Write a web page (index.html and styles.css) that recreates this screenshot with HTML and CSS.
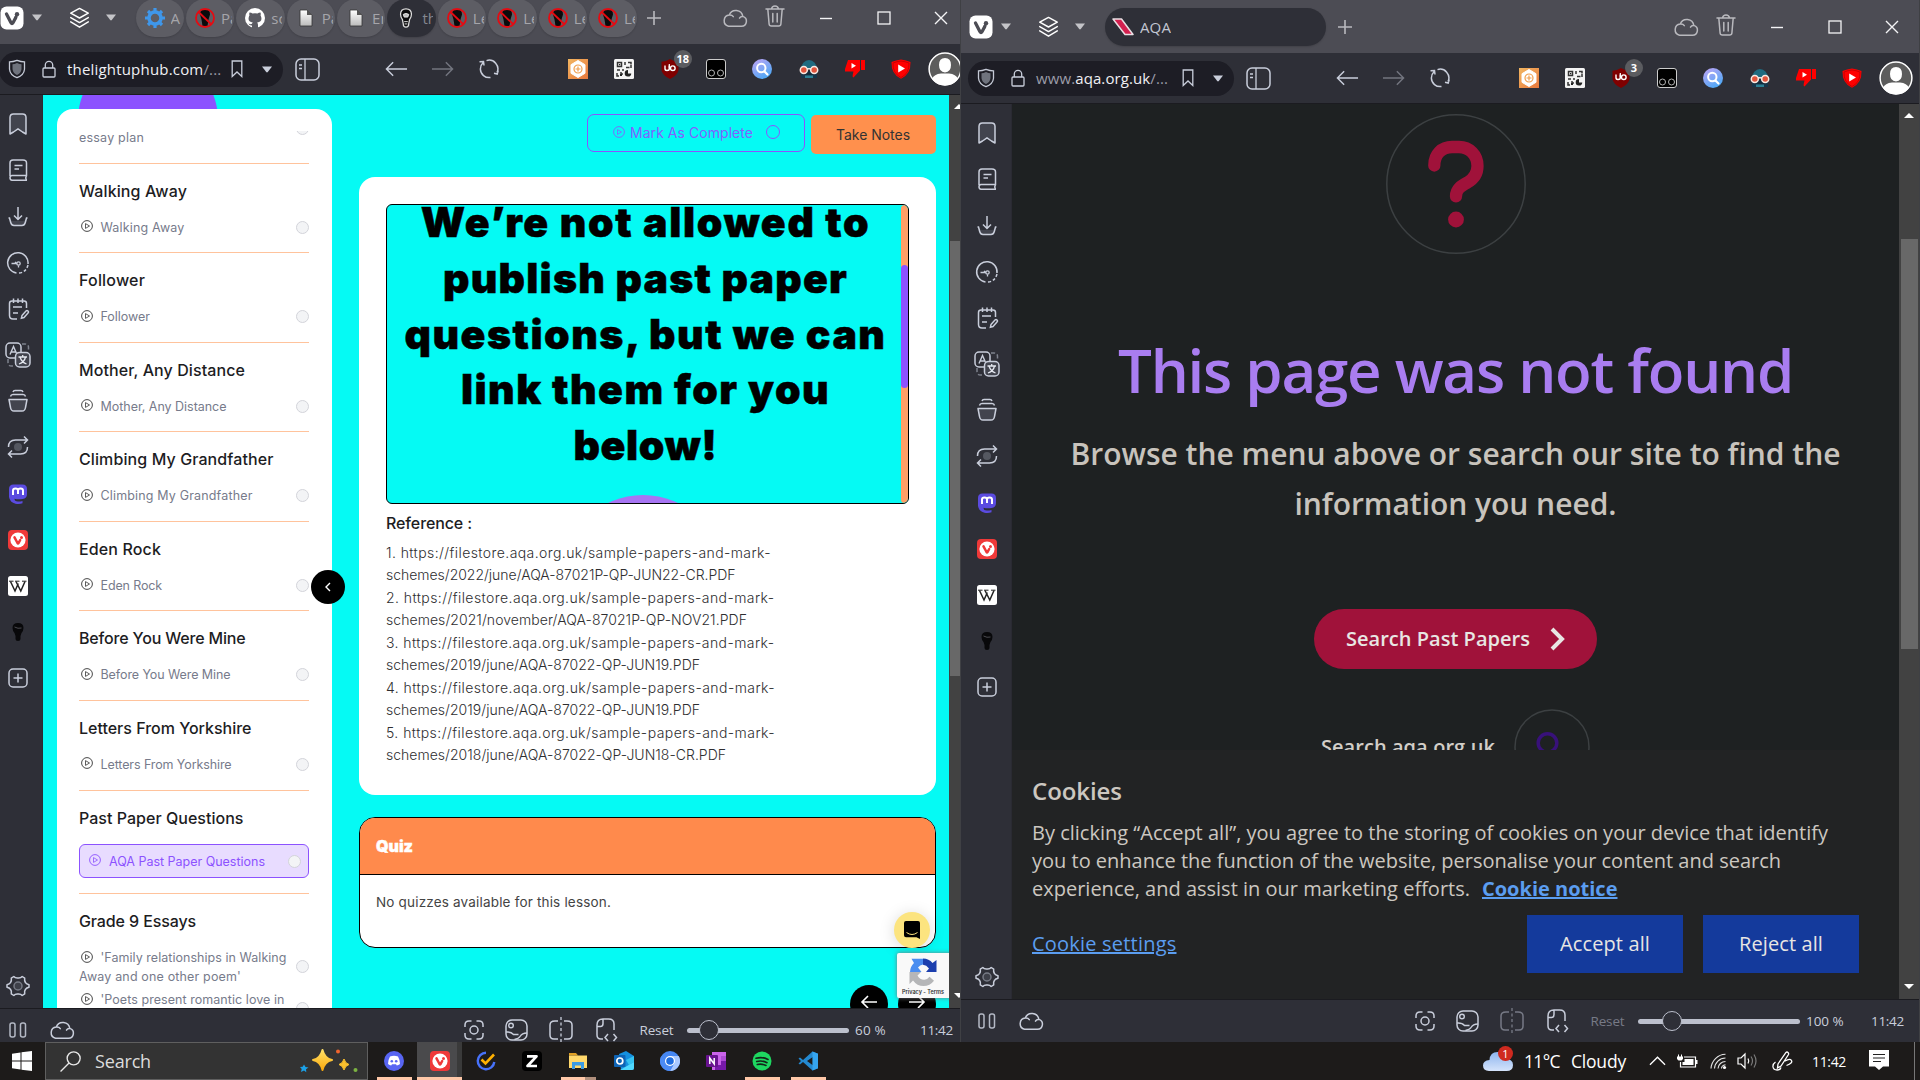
FILE: index.html
```html
<!DOCTYPE html>
<html lang="en">
<head>
<meta charset="utf-8">
<title>Desktop</title>
<link rel="stylesheet" href="styles.css">
</head>
<body>
<svg class="defs" aria-hidden="true">
  <linearGradient id="gOrange" x1="0" y1="0" x2="1" y2="1"><stop offset="0" stop-color="#f2b661"/><stop offset="1" stop-color="#e8783c"/></linearGradient>
  <linearGradient id="gSearch" x1="0" y1="0" x2="0.6" y2="1"><stop offset="0" stop-color="#c3a4f6"/><stop offset="1" stop-color="#4fa8f5"/></linearGradient>
  <linearGradient id="gStar" x1="0" y1="0" x2="0" y2="1"><stop offset="0" stop-color="#ffe066"/><stop offset="1" stop-color="#f9a90e"/></linearGradient>
  <linearGradient id="gCloud" x1="0" y1="0" x2="0" y2="1"><stop offset="0" stop-color="#8db4ee"/><stop offset="1" stop-color="#d5e4fb"/></linearGradient>
  <linearGradient id="gDoc" x1="0" y1="0" x2="0" y2="1"><stop offset="0" stop-color="#fff"/><stop offset="1" stop-color="#bbb"/></linearGradient>

  <symbol id="vivaldi" viewBox="0 0 24 24"><rect x=".5" y=".5" width="23" height="23" rx="6" fill="#fff"/><path d="M6.500 8 11 16.700q1 1.600 2 0L15.800 11.500" fill="none" stroke="#4c4c54" stroke-width="3.300" stroke-linecap="round" stroke-linejoin="round"/><circle cx="17" cy="8.300" r="2.200" fill="#4c4c54"/><path d="M16.500 9.500 15 13" stroke="#4c4c54" stroke-width="2.500"/></symbol>
  <symbol id="caret" viewBox="0 0 10 7"><path d="M0 .5h10L5.800 6q-.8.8-1.600 0z" fill="currentColor"/></symbol>
  <symbol id="layers" viewBox="0 0 22 22"><g fill="none" stroke="#fff" stroke-width="1.500" stroke-linejoin="round" stroke-linecap="round"><path d="M11 1 20.200 6 11 11 1.800 6z"/><path d="M1.800 10.500 11 15.800l9.200-5.300M1.800 15 11 20.600 20.200 15"/></g></symbol>
  <symbol id="plus" viewBox="0 0 16 16"><path d="M8 1v14M1 8h14" stroke="currentColor" stroke-width="1.600"/></symbol>
  <symbol id="cloud" viewBox="0 0 26 20"><path d="M6.500 18.200h13a5 5 0 0 0 1.300-9.800A7 7 0 0 0 7.300 7a5.700 5.700 0 0 0-.8 11.200zM7.300 7q2.800-.2 4 1.600M20.800 8.400q-2.300-.2-3.300 1.800" fill="none" stroke="currentColor" stroke-width="1.500" stroke-linecap="round"/></symbol>
  <symbol id="trash" viewBox="0 0 20 22"><path d="M1 4h18M6.500 4q.5-3 3.500-3t3.500 3M2.800 4l1.300 15q.2 2 2.200 2h7.400q2 0 2.200-2l1.300-15M7.800 8.500v8.500M12.200 8.500V17" fill="none" stroke="currentColor" stroke-width="1.500" stroke-linecap="round"/></symbol>
  <symbol id="min" viewBox="0 0 14 14"><path d="M1 7.500h12" stroke="#f4f4f6" stroke-width="1.400"/></symbol>
  <symbol id="max" viewBox="0 0 14 14"><rect x="1" y="1" width="12" height="12" fill="none" stroke="#f4f4f6" stroke-width="1.300"/></symbol>
  <symbol id="close" viewBox="0 0 14 14"><path d="M1 1l12 12M13 1 1 13" stroke="#f4f4f6" stroke-width="1.400"/></symbol>
  <symbol id="shield" viewBox="0 0 18 20"><path d="M9 1.300q4 1.500 7.500 1.500v7.400Q16 16 9 18.700 2 16 1.500 10.200V2.800Q5 2.800 9 1.300z" fill="none" stroke="#c5cad6" stroke-width="1.300"/><path d="M9 4q2.500 1.200 4.500 1.200v5q-.5 4-4.500 5.800-4-1.800-4.500-5.800v-5Q6.500 5.200 9 4z" fill="#6f737d"/></symbol>
  <symbol id="lock" viewBox="0 0 14 18"><rect x="1" y="8" width="12" height="9" rx="1" fill="none" stroke="#c9cedb" stroke-width="1.300"/><path d="M3.300 8V5a3.700 3.700 0 0 1 7.400 0v3" fill="none" stroke="#c9cedb" stroke-width="1.300"/></symbol>
  <symbol id="mark" viewBox="0 0 12 18"><path d="M1.200 1h9.600v15.500L6 12l-4.800 4.500z" fill="none" stroke="#c9cedb" stroke-width="1.300"/></symbol>
  <symbol id="panel" viewBox="0 0 25 23"><rect x="1" y="1" width="23" height="21" rx="5" fill="none" stroke="#c9cedb" stroke-width="1.500"/><path d="M10 1v21M4 7h3M4 10.500h3" stroke="#c9cedb" stroke-width="1.300"/></symbol>
  <symbol id="back" viewBox="0 0 24 16"><path d="M23 8H1.500M8.500 1 1.500 8l7 7" fill="none" stroke="currentColor" stroke-width="1.500"/></symbol>
  <symbol id="forward" viewBox="0 0 24 16"><path d="M1 8h21.500M15.500 1l7 7-7 7" fill="none" stroke="currentColor" stroke-width="1.500"/></symbol>
  <symbol id="reload" viewBox="0 0 22 22"><path d="M5.500 17.600A8.600 8.600 0 0 1 5 4.800M8.500 2.600a8.700 8.700 0 0 1 10.500 12M1.500 3.800l4-.3.500 4M16 15.300l3.200.7 1-3.500M5.500 17.600q3 2.500 7 1.900" fill="none" stroke="#c9cedb" stroke-width="1.500"/></symbol>

  <symbol id="xHex" viewBox="0 0 20 20"><rect width="20" height="20" fill="url(#gOrange)"/><path d="M10 1.500 17 5.700v8.600L10 18.500 3 14.300V5.700z" fill="#fff" stroke="#fff" stroke-linejoin="round"/><circle cx="10" cy="10" r="4" fill="none" stroke="#f0a050" stroke-width="1.200"/><path d="M10 7.500v5M7.500 10h5" stroke="#f0a050" stroke-width="1.200"/></symbol>
  <symbol id="xQr" viewBox="0 0 20 20"><rect width="20" height="20" rx="1.500" fill="#f4f4f4"/><g fill="none" stroke="#333" stroke-width="1.500"><path d="M3.500 3.500h4v4h-4zM11 3v3M12 8.500h3.500M14 3.500h3v2M17 6v3M3 11h3M8 11h2M3 14v3h2M7 13v2h2"/></g><path d="M14 11a3.300 3.300 0 1 0 3.300 3.500H14z" fill="#222"/><path d="M5 5h1.200v1.200H5zM6 15h2v2H6z" fill="#222"/></symbol>
  <symbol id="xUb" viewBox="0 0 18 20"><path d="M9 0q4 2.500 8.500 2.700V11q-.5 5-8.500 9Q1 16 .5 11V2.700Q5 2.500 9 0z" fill="#800000"/><path d="M4 6.500v3.200q0 1.800 2 1.800 2.300 0 2.300-1.800V6.500M9.300 6.500" fill="none" stroke="#fff" stroke-width="1.400"/><path d="M8.300 5v4.500" stroke="#fff" stroke-width="1.200"/><circle cx="11.800" cy="9.200" r="2.300" fill="none" stroke="#fff" stroke-width="1.400"/></symbol>
  <symbol id="xTamper" viewBox="0 0 20 20"><rect x=".5" y=".5" width="19" height="19" rx="2.500" fill="#000" stroke="#ccc"/><circle cx="5.500" cy="14" r="3" fill="none" stroke="#b5b5b5"/><circle cx="14.500" cy="14" r="3" fill="none" stroke="#b5b5b5"/></symbol>
  <symbol id="xSearch" viewBox="0 0 20 20"><circle cx="10" cy="10" r="10" fill="url(#gSearch)"/><circle cx="9.300" cy="9" r="4.200" fill="none" stroke="#fff" stroke-width="2"/><path d="m12.500 12.500 3 3" stroke="#fff" stroke-width="2.200" stroke-linecap="round"/></symbol>
  <symbol id="xHat" viewBox="0 0 20 20"><path d="M2 10a8 9 0 0 1 16 0z" fill="#1f6b80"/><path d="M2 14h16v5H2z" fill="#16354a"/><path d="M6 16.500h8V19H6z" fill="#2c7f93"/><path d="M4 12h12v4H4z" fill="#122b3b"/><circle cx="4.800" cy="11" r="3.500" fill="#e2553c" stroke="#f7e9e2" stroke-width="1.500"/><circle cx="15.200" cy="11" r="3.500" fill="#e2553c" stroke="#f7e9e2" stroke-width="1.500"/><path d="M8 9.800h4" stroke="#f7e9e2" stroke-width="1.500"/></symbol>
  <symbol id="xDislike" viewBox="0 0 20 20"><path d="M3 1h12v10.500L8.500 18.500q-1.300-.5-.8-2.500l.8-3.500H0V10z M16 1h4v10h-4z" fill="#f00"/><path d="M6.500 4v5.500L11 6.800z" fill="#fff"/></symbol>
  <symbol id="xSponsor" viewBox="0 0 20 20"><path d="M10 .5Q15 1 19.500 3 20 15 10 19.800 0 15 .5 3 5 1 10 .5z" fill="#f00"/><path d="M10 2q4 .4 8 2 .5 10.500-8 14.500Q1.500 14.500 2 4q4-1.600 8-2z" fill="none" stroke="#b50000" stroke-width=".7"/><path d="M7.200 5.500v8L14 9.500z" fill="#fff"/></symbol>
  <symbol id="avatar" viewBox="0 0 34 34"><circle cx="17" cy="17" r="16" fill="#5c5c5c"/><path d="M17 6q6 0 6 7 0 7-6 7.500-6-.5-6-7.500 0-7 6-7zM4 27q2-5 9-5.500h8q7 .5 9 5.500-5 6.500-13 6.500T4 27z" fill="#fff"/><circle cx="17" cy="17" r="15.900" fill="none" stroke="#fff" stroke-width="1.500"/></symbol>

  <symbol id="sBook" viewBox="0 0 24 24"><path d="M4 5.500Q4 2 7.500 2h9Q20 2 20 5.500V22l-3.500-2-4.500-3.200L7.500 20 4 22z" fill="#42444e" stroke="#c9cedb" stroke-width="1.500" stroke-linejoin="round"/></symbol>
  <symbol id="sRead" viewBox="0 0 24 24"><path d="M4 18V5q0-3 3-3h10q3.500 0 3.500 3v12.500H6Q4 17.500 4 19.800T6 22.200h15M20.500 17.500q-1.500 2.500 0 4.700M8.500 7.500h8M8.500 11h4.500" fill="none" stroke="#c9cedb" stroke-width="1.500"/></symbol>
  <symbol id="sDown" viewBox="0 0 24 24"><path d="M3.500 14.500q1 7 4.500 7h8q3.500 0 4.500-7-1.500 2.500-4 2.500h-9q-2.500 0-4-2.500z" fill="#42444e"/><path d="M12 3v12M8 11.500l4 4 4-4M2.500 14h1l1.200 4.500q.8 3 3.300 3h8q2.500 0 3.300-3l1.200-4.500h1" fill="none" stroke="#c9cedb" stroke-width="1.500"/></symbol>
  <symbol id="sHist" viewBox="0 0 24 24"><path d="M10.500 22A10.200 10.200 0 1 1 22 13" fill="none" stroke="#c9cedb" stroke-width="1.500"/><path d="M13 22q7-.5 9-8" fill="none" stroke="#c9cedb" stroke-width="1.500" stroke-dasharray="3 2"/><path d="M5.500 12.500H11M11 12.500l-2-1.500M12.500 14.500v2" stroke="#c9cedb" stroke-width="1.300"/><circle cx="12.500" cy="12.500" r="1.700" fill="none" stroke="#c9cedb" stroke-width="1.300"/></symbol>
  <symbol id="sNote" viewBox="0 0 24 24"><path d="M11 22H7q-3.500 0-3.500-3.500v-12Q3.500 4 6 4h12q2.500 0 2.500 2.500V11M7.500 1.500V6M12 1.500V6M16.500 1.500V6M7 10h9M7 16h5M16 18.500l4-4.500q1-1 2 0t0 2l-4 4.500-2.600.7z" fill="none" stroke="#c9cedb" stroke-width="1.500"/></symbol>
  <symbol id="sTrans" viewBox="0 0 26 26"><path d="M17 2h3q3.500 0 3.500 3.500V8M3 17v3.500Q3 24 6.500 24H9" fill="none" stroke="#7e828d" stroke-width="1.500" stroke-dasharray="4 2.500"/><rect x="1" y="1" width="15" height="15" rx="4" fill="#2e2f37" stroke="#c9cedb" stroke-width="1.500"/><path d="m5 12.500 3.500-8 3.500 8M6 10h5" fill="none" stroke="#c9cedb" stroke-width="1.400"/><rect x="10.500" y="10.500" width="14.500" height="14.500" rx="4" fill="#42444e" stroke="#c9cedb" stroke-width="1.500"/><path d="M13.500 15h8.500M17.700 13v2M20.500 15q-1 5-6.500 7M15 15q1.500 5 6.500 7" fill="none" stroke="#e4e7ef" stroke-width="1.300"/></symbol>
  <symbol id="sStack" viewBox="0 0 24 24"><path d="M3 10.500h18l-1.500 8Q19 22 16 22H8q-3 0-3.500-3.500z" fill="#42444e" stroke="#c9cedb" stroke-width="1.500" stroke-linejoin="round"/><path d="M4.500 7.500q.5-2 2.500-2h10q2 0 2.500 2M7 3q.5-1.500 2-1.500h6q1.500 0 2 1.500" fill="none" stroke="#c9cedb" stroke-width="1.500"/></symbol>
  <symbol id="sSync" viewBox="0 0 24 24"><circle cx="12" cy="12" r="4" fill="#555861"/><path d="M2.500 12q0-7 7-7h12M18 1.500 21.500 5 18 8.500M21.500 12q0 7-7 7h-12M6 15.500 2.500 19 6 22.500" fill="none" stroke="#c9cedb" stroke-width="1.500"/></symbol>
  <symbol id="sMast" viewBox="0 0 20 20"><path d="M1 5Q1 .5 5.500.5h9Q19 .5 19 5v5q0 4.500-4.500 5-4 .7-8-.2 0 3 4 2.700 2 0 4-.5v2.200q-3 1.200-7 .5Q2 18.500 1 13z" fill="#5b4be0"/><path d="M5 11V6.500q0-2 2.500-2T10 6.500V10M10 6.500q0-2 2.500-2t2.500 2V11" fill="none" stroke="#fff" stroke-width="2"/></symbol>
  <symbol id="sViv" viewBox="0 0 20 20"><rect width="20" height="20" rx="4" fill="#ef3939"/><circle cx="10" cy="10" r="7.600" fill="#fff"/><path d="m6.500 7.300 3 5.700q.5.800 1 0l1.700-3" fill="none" stroke="#ef3939" stroke-width="2.500" stroke-linecap="round"/><circle cx="13.500" cy="7.500" r="1.500" fill="#ef3939"/></symbol>
  <symbol id="sWiki" viewBox="0 0 20 20"><rect width="20" height="20" rx="2.500" fill="#fff"/><path d="M2.500 5.500 7 15l3.300-7.500M8 5.500 12.800 15l4.200-9.500" fill="none" stroke="#222" stroke-width="1.500"/><path d="M1 5.200h4.500M7 5.200h4.500M14 5.200h4.500" stroke="#222" stroke-width="1"/></symbol>
  <symbol id="sBulb" viewBox="0 0 20 20"><path d="M10 1q5.500 0 5.500 5 0 2.500-2 5l-1 3v3q0 2-2.500 2t-2.500-2v-3l-1-3q-2-2.500-2-5 0-5 5.500-5z" fill="#08080a"/><path d="M6.500 5q3.500 2 7 1" stroke="#4b4b50" fill="none"/></symbol>
  <symbol id="sAdd" viewBox="0 0 20 20"><rect x="1" y="1" width="18" height="18" rx="4" fill="none" stroke="#c9cedb" stroke-width="1.500"/><path d="M10 5.500v9M5.500 10h9" stroke="#c9cedb" stroke-width="1.500"/></symbol>
  <symbol id="gear" viewBox="0 0 24 24"><path d="M7.800 2.500q1.500 1.800 4.200 1.500 2.700.3 4.200-1.500l2.500 1.700q-.5 2.800.8 4.500 1 1.500 3.500 2v2.600q-2.500.5-3.500 2-1.300 1.700-.8 4.500l-2.500 1.700q-1.500-1.800-4.200-1.500-2.700-.3-4.200 1.500l-2.500-1.700q.5-2.800-.8-4.500-1-1.500-3.500-2v-2.600q2.500-.5 3.500-2 1.300-1.700.8-4.500z" fill="none" stroke="#c9cedb" stroke-width="1.500" stroke-linejoin="round"/><circle cx="12" cy="12" r="4" fill="#3e4049" stroke="#777b86" stroke-width="1.500"/></symbol>

  <symbol id="tile" viewBox="0 0 18 16"><path d="M1 3q0-2 2-2h1q2 0 2 2v10q0 2-2 2H3q-2 0-2-2zM11.500 3q0-2 2-2h1q2 0 2 2v10q0 2-2 2h-1q-2 0-2-2z" fill="none" stroke="#b4b9c5" stroke-width="1.500"/></symbol>
  <symbol id="capture" viewBox="0 0 20 20"><path d="M1 7V5q0-4 4-4h2.500M12.500 1H15q4 0 4 4v2M19 13v2q0 4-4 4h-2.500M7.500 19H5q-4 0-4-4v-2" fill="none" stroke="#c9cedb" stroke-width="1.500"/><circle cx="10" cy="10" r="4" fill="none" stroke="#c9cedb" stroke-width="1.500"/></symbol>
  <symbol id="picture" viewBox="0 0 23 22"><rect x="1" y="1" width="21" height="20" rx="6" fill="none" stroke="#c9cedb" stroke-width="1.500"/><circle cx="6" cy="6.500" r="2.300" fill="none" stroke="#c9cedb" stroke-width="1.400"/><path d="M1 13q5-.5 7.500 2.500h5M22 14q-5 0-7 3.500-1 2-5.500 3" fill="none" stroke="#c9cedb" stroke-width="1.400"/></symbol>
  <symbol id="split" viewBox="0 0 26 26"><path d="M10 4H7Q2 4 2 8v10q0 4 4 4h4M16 4h3q5 0 5 4v10q0 4-4 4h-4" fill="none" stroke="currentColor" stroke-width="1.500"/><path d="M13 0v26" stroke="currentColor" stroke-width="1.300" stroke-dasharray="3 2.500"/></symbol>
  <symbol id="actions" viewBox="0 0 22 24"><path d="M7 21H5q-4 0-4-4V7q0-6 6-6h5.500Q18 1 18 6v6M1.500 8.500h3q2.500 0 2.500-3V1M12 16l-3 3.500 3 3.500M17.500 16l3 3.500-3 3.500" fill="none" stroke="#c9cedb" stroke-width="1.500"/></symbol>

  <symbol id="fGear" viewBox="0 0 20 20"><circle cx="10" cy="10" r="6" fill="none" stroke="#3f97ea" stroke-width="3.500"/><path d="M10 0v4M10 16v4M0 10h4M16 10h4M3 3l2.800 2.800M14.200 14.200 17 17M17 3l-2.800 2.800M3 17l2.800-2.800" stroke="#3f97ea" stroke-width="3.200"/></symbol>
  <symbol id="fNo" viewBox="0 0 20 20"><path d="M10 1q5 0 5 5.500l-1.500 5-1 6.500h-5l-1-6.500-1.500-5Q5 1 10 1z" fill="#0b0b0c"/><circle cx="10" cy="10" r="9" fill="none" stroke="#e50b12" stroke-width="1.800"/><path d="m3.500 4 13 12.500" stroke="#e50b12" stroke-width="1.800"/></symbol>
  <symbol id="fGit" viewBox="0 0 20 20"><circle cx="10" cy="10" r="10" fill="#fff"/><path d="M4.500 4.500q1.800 0 3 1.100 2.500-.6 5 0 1.200-1.100 3-1.100.5 1.500 0 2.800 3 6.200-3.300 7.200.8 1 .8 2.500v3H7v-2.500q-2.500.5-3.500-2 2.300 1.200 3.500.3.200-.8.800-1.300-6.300-1-3.300-7.200-.5-1.300 0-2.800z" fill="#5b5b63"/></symbol>
  <symbol id="fDoc" viewBox="0 0 20 20"><path d="M4 2h7l5 5v11H4z" fill="url(#gDoc)" stroke="#333" stroke-width=".8"/><path d="M11 2v5h5" fill="#555"/></symbol>
  <symbol id="fBulb" viewBox="0 0 20 22"><path d="M10 1q6 0 6 6 0 3-2 5.500l-1 5Q13 21 10 21t-3-3.500l-1-5Q4 10 4 7q0-6 6-6z" fill="#0b0b0c" stroke="#ddd" stroke-width="1.400"/><path d="M7 7q3-2 6 0l-1 3H8zM8 15h4M8.500 17.500h3" stroke="#eee" fill="#bbb"/></symbol>
  <symbol id="fAqa" viewBox="0 0 22 18"><path d="M1 1h8.500L21 16.500h-8z" fill="#d3204f" stroke="#e9dfe3" stroke-width="1.500" stroke-linejoin="round"/></symbol>
  <symbol id="play" viewBox="0 0 12 12"><circle cx="6" cy="6" r="5.400" fill="none" stroke="currentColor" stroke-width=".9"/><path d="M4.500 3.600v4.800L8.500 6z" fill="none" stroke="currentColor" stroke-width=".8" stroke-linejoin="round"/></symbol>
</svg>

<main class="desktop">

<section class="window window-left">
  <header class="titlebar">
    <svg class="logo"><use href="#vivaldi"/></svg><svg class="caret caret-a"><use href="#caret"/></svg>
    <svg class="layers"><use href="#layers"/></svg><svg class="caret caret-b"><use href="#caret"/></svg>
    <nav class="tabs">
      <div class="tab"><svg><use href="#fGear"/></svg><span>A</span></div>
      <div class="tab"><svg><use href="#fNo"/></svg><span>Pa</span></div>
      <div class="tab"><svg><use href="#fGit"/></svg><span>sc</span></div>
      <div class="tab"><svg><use href="#fDoc"/></svg><span>Pa</span></div>
      <div class="tab"><svg><use href="#fDoc"/></svg><span>En</span></div>
      <div class="tab active"><svg><use href="#fBulb"/></svg><span>th</span></div>
      <div class="tab"><svg><use href="#fNo"/></svg><span>Le</span></div>
      <div class="tab"><svg><use href="#fNo"/></svg><span>Le</span></div>
      <div class="tab"><svg><use href="#fNo"/></svg><span>Le</span></div>
      <div class="tab"><svg><use href="#fNo"/></svg><span>Le</span></div>
    </nav>
    <svg class="newtab"><use href="#plus"/></svg>
    <div class="tb-icons"><svg class="cl"><use href="#cloud"/></svg><svg class="tr"><use href="#trash"/></svg></div>
    <div class="winctl"><svg><use href="#min"/></svg><svg><use href="#max"/></svg><svg><use href="#close"/></svg></div>
  </header>
  <div class="toolbar">
    <div class="url"><svg class="shield"><use href="#shield"/></svg><svg class="lock"><use href="#lock"/></svg><span class="addr" data-fit="154.500"><b>thelightuphub.com</b>/...</span><svg class="mark"><use href="#mark"/></svg><svg class="drop"><use href="#caret"/></svg></div>
    <svg class="panelbtn"><use href="#panel"/></svg>
    <div class="navs"><svg class="arrow"><use href="#back"/></svg><svg class="arrow dim"><use href="#forward"/></svg><svg class="reload"><use href="#reload"/></svg></div>
    <div class="exts">
      <i><svg><use href="#xHex"/></svg></i><i><svg><use href="#xQr"/></svg></i><i><svg><use href="#xUb"/></svg><em>18</em></i><i><svg><use href="#xTamper"/></svg></i><i><svg><use href="#xSearch"/></svg></i><i><svg><use href="#xHat"/></svg></i><i><svg><use href="#xDislike"/></svg></i><i><svg><use href="#xSponsor"/></svg></i>
    </div>
    <svg class="avatar"><use href="#avatar"/></svg>
  </div>
  <div class="middle">
    <aside class="panelbar">
      <svg><use href="#sBook"/></svg><svg><use href="#sRead"/></svg><svg><use href="#sDown"/></svg><svg><use href="#sHist"/></svg><svg><use href="#sNote"/></svg><svg class="wide"><use href="#sTrans"/></svg><svg><use href="#sStack"/></svg><svg><use href="#sSync"/></svg><svg class="fav"><use href="#sMast"/></svg><svg class="fav"><use href="#sViv"/></svg><svg class="fav"><use href="#sWiki"/></svg><svg class="fav"><use href="#sBulb"/></svg><svg class="fav"><use href="#sAdd"/></svg>
      <svg class="gear"><use href="#gear"/></svg>
    </aside>
    <div class="page hub">
      <div class="blob"></div>
      <div class="lessons">
        <div class="lessons-scroll">
          <div class="cut"><span data-fit="65">essay plan</span><u class="half"></u></div>
          <section><h4 data-fit="108">Walking Away</h4><p><svg><use href="#play"/></svg><span data-fit="84">Walking Away</span><u></u></p></section>
          <section><h4 data-fit="66">Follower</h4><p><svg><use href="#play"/></svg><span data-fit="49.500">Follower</span><u></u></p></section>
          <section><h4 data-fit="166">Mother, Any Distance</h4><p><svg><use href="#play"/></svg><span data-fit="126">Mother, Any Distance</span><u></u></p></section>
          <section><h4 data-fit="194.500">Climbing My Grandfather</h4><p><svg><use href="#play"/></svg><span data-fit="152">Climbing My Grandfather</span><u></u></p></section>
          <section><h4 data-fit="82">Eden Rock</h4><p><svg><use href="#play"/></svg><span data-fit="61.500">Eden Rock</span><u></u></p></section>
          <section><h4 data-fit="166.500">Before You Were Mine</h4><p><svg><use href="#play"/></svg><span data-fit="130">Before You Were Mine</span><u></u></p></section>
          <section><h4 data-fit="172.500">Letters From Yorkshire</h4><p><svg><use href="#play"/></svg><span data-fit="131">Letters From Yorkshire</span><u></u></p></section>
          <section class="current"><h4 data-fit="164.500">Past Paper Questions</h4><p><svg><use href="#play"/></svg><span data-fit="156">AQA Past Paper Questions</span><u></u></p></section>
          <section class="essays"><h4 data-fit="117">Grade 9 Essays</h4>
            <div class="long"><svg><use href="#play"/></svg><span data-fit="186">'Family relationships in Walking</span><br><span data-fit="162">Away and one other poem'</span><u></u></div>
            <div class="long"><svg><use href="#play"/></svg><span data-fit="184">'Poets present romantic love in</span><br>&nbsp;<u></u></div>
          </section>
        </div>
        <button class="collapse"><svg viewBox="0 0 6 10"><path d="M5 1 1 5l4 4" fill="none" stroke="#fff" stroke-width="1.400"/></svg></button>
      </div>
      <div class="lesson">
        <div class="actions">
          <button class="done"><svg class="pl"><use href="#play"/></svg><span data-fit="123">Mark As Complete</span><i></i></button>
          <button class="notes"><span data-fit="74">Take Notes</span></button>
        </div>
        <article class="card">
          <div class="slide">
            <h1><span data-fit="449.500">We’re not allowed to</span><span data-fit="405">publish past paper</span><span data-fit="482">questions, but we can</span><span data-fit="369">link them for you</span><span data-fit="144">below!</span></h1>
            <div class="slide-scroll"><div></div></div>
            <div class="bump"></div>
          </div>
          <h5><span data-fit="86">Reference :</span></h5>
          <ol>
            <li><span data-fit="385">1. https://filestore.aqa.org.uk/sample-papers-and-mark-</span><span data-fit="349.500">schemes/2022/june/AQA-87021P-QP-JUN22-CR.PDF</span></li>
            <li><span data-fit="388.500">2. https://filestore.aqa.org.uk/sample-papers-and-mark-</span><span data-fit="361">schemes/2021/november/AQA-87021P-QP-NOV21.PDF</span></li>
            <li><span data-fit="388.500">3. https://filestore.aqa.org.uk/sample-papers-and-mark-</span><span data-fit="314">schemes/2019/june/AQA-87022-QP-JUN19.PDF</span></li>
            <li><span data-fit="389">4. https://filestore.aqa.org.uk/sample-papers-and-mark-</span><span data-fit="314">schemes/2019/june/AQA-87022-QP-JUN19.PDF</span></li>
            <li><span data-fit="389">5. https://filestore.aqa.org.uk/sample-papers-and-mark-</span><span data-fit="340">schemes/2018/june/AQA-87022-QP-JUN18-CR.PDF</span></li>
          </ol>
        </article>
        <article class="quiz">
          <header><span data-fit="37">Quiz</span></header>
          <div><span data-fit="235">No quizzes available for this lesson.</span></div>
        </article>
        <div class="pager">
          <b><svg viewBox="0 0 18 14"><path d="M17 7H2M8 1 2 7l6 6" fill="none" stroke="#fff" stroke-width="1.600"/></svg></b>
          <b><svg viewBox="0 0 18 14"><path d="M1 7h15M10 1l6 6-6 6" fill="none" stroke="#fff" stroke-width="1.600"/></svg></b>
        </div>
      </div>
      <div class="chat"><svg viewBox="0 0 16 18"><path d="M2 0h12q2 0 2 2v16l-3.500-1.700H2q-2 0-2-2V2q0-2 2-2z" fill="#000"/><path d="M2.500 11.500Q8 15.500 13.500 11.500" fill="none" stroke="#fce47f"/></svg></div>
      <div class="captcha">
        <svg viewBox="0 0 28 28"><path d="M1 14A13 13 0 0 1 5 5L2.500.8H14v5.700A7.500 7.500 0 0 0 9 9.500l3.500 4.500z" fill="#4a8df0"/><path d="M14 .5q6 0 9.500 4.500L27.500 2v12H17l3-3.500Q17.500 7 14 6.700z" fill="#1c3fae"/><path d="M.5 14H12l-3.500 3.500q2.500 4.500 7 4.300 3-.3 5-3l4.500 4Q21 28 14.500 28q-6.500 0-10.500-5.500L.5 26z" fill="#b5b6b8"/></svg>
        <small data-fit="42">Privacy - Terms</small>
      </div>
    </div>
    <div class="scroll"><div class="up"></div><div class="thumb"></div><div class="down"></div></div>
  </div>
  <footer class="status">
    <svg class="tile"><use href="#tile"/></svg><svg class="cl"><use href="#cloud"/></svg>
    <div class="st-icons"><svg class="c1"><use href="#capture"/></svg><svg class="c2"><use href="#picture"/></svg><svg class="c3"><use href="#split"/></svg><svg class="c4"><use href="#actions"/></svg></div>
    <div class="zoom"><span class="reset"><span data-fit="34">Reset</span></span><div class="slider"><i></i></div><span class="pct"><span data-fit="31">60 %</span></span><span class="clock"><span data-fit="33">11:42</span></span></div>
  </footer>
</section>

<section class="window window-right">
  <header class="titlebar">
    <svg class="logo"><use href="#vivaldi"/></svg><svg class="caret caret-a"><use href="#caret"/></svg>
    <svg class="layers"><use href="#layers"/></svg><svg class="caret caret-b"><use href="#caret"/></svg>
    <nav class="tabs"><div class="tab active single"><svg><use href="#fAqa"/></svg><span data-fit="31">AQA</span></div></nav>
    <svg class="newtab"><use href="#plus"/></svg>
    <div class="tb-icons"><svg class="cl"><use href="#cloud"/></svg><svg class="tr"><use href="#trash"/></svg></div>
    <div class="winctl"><svg><use href="#min"/></svg><svg><use href="#max"/></svg><svg><use href="#close"/></svg></div>
  </header>
  <div class="toolbar">
    <div class="url"><svg class="shield"><use href="#shield"/></svg><svg class="lock"><use href="#lock"/></svg><span class="addr" data-fit="132">www.<b>aqa.org.uk</b>/...</span><svg class="mark"><use href="#mark"/></svg><svg class="drop"><use href="#caret"/></svg></div>
    <svg class="panelbtn"><use href="#panel"/></svg>
    <div class="navs"><svg class="arrow"><use href="#back"/></svg><svg class="arrow dim"><use href="#forward"/></svg><svg class="reload"><use href="#reload"/></svg></div>
    <div class="exts">
      <i><svg><use href="#xHex"/></svg></i><i><svg><use href="#xQr"/></svg></i><i><svg><use href="#xUb"/></svg><em>3</em></i><i><svg><use href="#xTamper"/></svg></i><i><svg><use href="#xSearch"/></svg></i><i><svg><use href="#xHat"/></svg></i><i><svg><use href="#xDislike"/></svg></i><i><svg><use href="#xSponsor"/></svg></i>
    </div>
    <svg class="avatar"><use href="#avatar"/></svg>
  </div>
  <div class="middle">
    <aside class="panelbar">
      <svg><use href="#sBook"/></svg><svg><use href="#sRead"/></svg><svg><use href="#sDown"/></svg><svg><use href="#sHist"/></svg><svg><use href="#sNote"/></svg><svg class="wide"><use href="#sTrans"/></svg><svg><use href="#sStack"/></svg><svg><use href="#sSync"/></svg><svg class="fav"><use href="#sMast"/></svg><svg class="fav"><use href="#sViv"/></svg><svg class="fav"><use href="#sWiki"/></svg><svg class="fav"><use href="#sBulb"/></svg><svg class="fav"><use href="#sAdd"/></svg>
      <svg class="gear"><use href="#gear"/></svg>
    </aside>
    <div class="page aqa">
      <svg class="question" viewBox="0 0 140 140"><circle cx="70" cy="70" r="69.200" fill="none" stroke="#3c4042" stroke-width="1.500"/><path d="M48.300 51.500C48.300 40 56 33 66 33h7c10.500 0 18.500 8 18.500 19 0 8-4 13-10 16.500C75 72 70 75 70 82.300" fill="none" stroke="#a0123a" stroke-width="12.300" stroke-linecap="round"/><circle cx="70" cy="105.500" r="7.900" fill="#a0123a"/></svg>
      <h1><span data-fit="675">This page was not found</span></h1>
      <h2><span data-fit="770">Browse the menu above or search our site to find the</span><span data-fit="322">information you need.</span></h2>
      <button class="papers"><span data-fit="184">Search Past Papers</span><svg viewBox="0 0 16 24"><path d="M3 2l10 10L3 22" fill="none" stroke="#e8e6e3" stroke-width="4"/></svg></button>
      <div class="find"><span data-fit="174">Search aqa.org.uk</span><svg viewBox="0 0 76 76"><circle cx="38" cy="38" r="37" fill="none" stroke="#3c4042" stroke-width="1.500"/><circle cx="33.500" cy="34" r="9.300" fill="none" stroke="#38117a" stroke-width="3.500"/></svg></div>
      <div class="cookies">
        <h3><span data-fit="90">Cookies</span></h3>
        <p><span data-fit="796">By clicking “Accept all”, you agree to the storing of cookies on your device that identify</span><br><span data-fit="749">you to enhance the function of the website, personalise your content and search</span><br><span data-fit="438">experience, and assist in our marketing efforts.</span><a class="notice" data-fit="135.500">Cookie notice</a></p>
        <div class="choices"><a data-fit="144.500">Cookie settings</a><button><span data-fit="90">Accept all</span></button><button><span data-fit="84">Reject all</span></button></div>
      </div>
    </div>
    <div class="scroll"><div class="up"></div><div class="thumb"></div><div class="down"></div></div>
  </div>
  <footer class="status">
    <svg class="tile"><use href="#tile"/></svg><svg class="cl"><use href="#cloud"/></svg>
    <div class="st-icons"><svg class="c1"><use href="#capture"/></svg><svg class="c2"><use href="#picture"/></svg><svg class="c3 off"><use href="#split"/></svg><svg class="c4"><use href="#actions"/></svg></div>
    <div class="zoom"><span class="reset off"><span data-fit="34">Reset</span></span><div class="slider"><i></i></div><span class="pct"><span data-fit="37.500">100 %</span></span><span class="clock"><span data-fit="33">11:42</span></span></div>
  </footer>
</section>

<footer class="taskbar">
  <div class="start"><svg viewBox="0 0 20 20"><path d="M0 2.700 8.500 1.500v8H0zM9.500 1.300 20 0v9.500H9.500zM0 10.500h8.500v8L0 17.300zM9.500 10.500H20V20L9.500 18.700z" fill="#fff"/></svg></div>
  <div class="searchbox">
    <svg class="glass" viewBox="0 0 20 20"><circle cx="13" cy="7" r="6.200" fill="none" stroke="#e8e8e8" stroke-width="1.300"/><path d="M8.600 11.500.500 19.500" stroke="#e8e8e8" stroke-width="1.300"/></svg>
    <span data-fit="56">Search</span>
    <svg class="sparkle" viewBox="0 0 58 24"><path d="M22.500 1q2 8.500 9.500 10-7.500 1.500-9.500 10-2-8.500-9.500-10 7.500-1.500 9.500-10z" fill="url(#gStar)" stroke="url(#gStar)" stroke-width="2" stroke-linejoin="round"/><path d="M44 10q1.300 4.500 5 5.500-3.700 1-5 5.500-1.300-4.500-5-5.500 3.700-1 5-5.500z" fill="#fbc02d" stroke="#fbc02d" stroke-linejoin="round"/><path d="M4 15.500 5.500 18l3 .5-2.500 1.800.3 3L4 21.500 1 23l.7-3L0 18l2.700-.2z" fill="#1ba1e8"/><circle cx="38" cy="2.500" r="2" fill="#f0642d"/><circle cx="55.500" cy="21" r="2" fill="#7cb342"/></svg>
  </div>
  <nav class="apps">
    <i class="run"><svg viewBox="0 0 20 20"><circle cx="10" cy="10" r="10" fill="#5865f2"/><path d="M6 5.500q4-1.500 8 0 2 3.500 2 7.500-1.500 1.300-3.200 1.500l-.8-1.300H8l-.8 1.300Q5.500 14.300 4 13q0-4 2-7.500z" fill="#fff"/><circle cx="7.800" cy="10.300" r="1.300" fill="#5865f2"/><circle cx="12.200" cy="10.300" r="1.300" fill="#5865f2"/></svg></i>
    <i class="run focus"><svg><use href="#sViv"/></svg></i>
    <i><svg viewBox="0 0 20 20"><path d="M10 1.700a8.300 8.300 0 1 0 8.300 9.300" fill="none" stroke="#4772fa" stroke-width="2.400"/><path d="m5.500 8.500 4 4L18 3.500" fill="none" stroke="#ffb000" stroke-width="2.600"/></svg></i>
    <i><svg viewBox="0 0 20 20"><rect width="20" height="20" rx="4" fill="#000"/><path d="M5 5.300h9.500L5.500 15H15" fill="none" stroke="#fff" stroke-width="2.700" stroke-linejoin="round"/></svg></i>
    <i class="run multi"><svg viewBox="0 0 20 20"><path d="M1 2h7l2 2.500H1z" fill="#e0a025"/><path d="M1 4.500h18V17H1z" fill="#ffd86b"/><path d="M4 18v-7h12v7h-3v-3.500H7V18z" fill="#3b9be3"/></svg></i>
    <i><svg viewBox="0 0 20 20"><path d="M5 3 12 0l8 5v12q0 2-2 2H7z" fill="#1490df"/><path d="M12 9 20 5v6l-5 3z" fill="#35c2f1"/><path d="M6 19 20 11v6q0 2-2 2z" fill="#50d9ff"/><rect y="4" width="11.500" height="12" rx="1" fill="#0f64b5"/><circle cx="5.800" cy="10" r="3" fill="none" stroke="#fff" stroke-width="1.700"/></svg></i>
    <i><svg viewBox="0 0 20 20"><circle cx="10" cy="10" r="10" fill="#4587f4"/><path d="M10 5h8.700A10 10 0 0 1 10 20l4.500-8z" fill="#a9c8ff"/><path d="M1.300 5A10 10 0 0 0 10 20l4-7-7 0z" fill="#4c8bf5"/><circle cx="10" cy="10" r="5" fill="#fff"/><circle cx="10" cy="10" r="3.800" fill="#1f6de0"/></svg></i>
    <i><svg viewBox="0 0 20 20"><path d="M6 1h14v18H6z" fill="#ca64ea"/><path d="M15 5h5v5h-5z" fill="#ae4bd5"/><path d="M15 10h5v9H9v-5h6z" fill="#7719aa"/><rect y="4" width="12" height="12" rx="1" fill="#68138f"/><path d="M3.800 13V7l4.400 6V7" fill="none" stroke="#fff" stroke-width="1.500"/></svg></i>
    <i class="run"><svg viewBox="0 0 20 20"><circle cx="10" cy="10" r="9.500" fill="#1ed760"/><path d="M4 7.300q6.500-1.800 12 1.200M4.700 10.500q5.500-1.400 10.300 1.200M5.300 13.500q4.500-1.100 8.700 1" fill="none" stroke="#14241a" stroke-width="1.600" stroke-linecap="round"/></svg></i>
    <i class="run"><svg viewBox="0 0 20 20"><path d="M14.500.5 20 2.800v14.400l-5.500 2.300L5 11 2 13.500.5 12.600 3 10 .5 7.400 2 6.500 5 9zM14.800 6 9 10l5.800 4.200z" fill="#2489d0" fill-rule="evenodd"/><path d="M14.500.5 20 2.800v14.400l-5.500 2.300z" fill="#35a5f0"/></svg></i>
  </nav>
  <div class="tray">
    <svg class="weather" viewBox="0 0 32 26"><path d="M7 25q-6-.5-6-5.500T7.500 14Q8 6 15.500 6q6 0 7.500 6.500 8 .5 8 6.500 0 6-6.500 6z" fill="url(#gCloud)"/><circle cx="23.500" cy="7.500" r="7.500" fill="#cf2a1f"/><text x="23.500" y="11.500" text-anchor="middle" class="badge">1</text></svg>
    <span class="temp" data-fit="36">11°C</span><span class="cond" data-fit="55">Cloudy</span>
    <svg class="t1" viewBox="0 0 18 10"><path d="m1 9 8-8 8 8" fill="none" stroke="#fff" stroke-width="1.400"/></svg>
    <svg class="t2" viewBox="0 0 21 14"><path d="M7 2.500h11.500v10H3.500v-5" fill="none" stroke="#fff" stroke-width="1.200"/><path d="M7.500 4.500h9v6h-11v-3h2zM19 5.500h1.500v4H19zM0 2h6v2.500L4.500 6h-3L0 4.500zM1 0h1v2H1zM4 0h1v2H4z" fill="#fff"/></svg>
    <svg class="t3" viewBox="0 0 17 16"><path d="M1 15A15 15 0 0 1 15.500.8M4.500 15A11 11 0 0 1 15.500 4.500M8 15a7.500 7.500 0 0 1 7.500-7M11.500 15q0-3 4-3.700" fill="none" stroke="#e5e5e5" stroke-width="1.100"/><circle cx="14.500" cy="14" r="1.600" fill="#fff"/></svg>
    <svg class="t4" viewBox="0 0 21 18"><path d="M1 6h3l4-4v14l-4-4H1z" fill="none" stroke="#fff" stroke-width="1.200"/><path d="M11 6.500q1.500 2.500 0 5" fill="none" stroke="#fff" stroke-width="1.200"/><path d="M14 4.500q3 4.500 0 9M17 2.500q4 6.500 0 13" fill="none" stroke="#7b7b7b" stroke-width="1.200"/></svg>
    <svg class="t5" viewBox="0 0 21 20"><path d="M6 13 14 1.500q1-1 2 0t.5 2L9 15l-3.500 2zM3.500 11q-3 2-2.500 5t4 3 4-2.500M13 10q5-3 6.500-.5t-5 5" fill="none" stroke="#fff" stroke-width="1.300"/></svg>
    <span class="time" data-fit="34">11:42</span>
    <svg class="t6" viewBox="0 0 20 20"><path d="M0 0h20v16.500h-6L10 20l-4-3.500H0z" fill="#fff"/><path d="M4 4.500h12M4 8h12M4 11.500h8" stroke="#222" stroke-width="1.100"/></svg>
  </div>
</footer>
</main>
<script src="labels.js"></script>
</body>
</html>
```
FILE: labels.js
```js
// Tracks each label out or in so that it fills the width given in data-fit.
document.querySelectorAll('[data-fit]').forEach(function (el) {
  var range = document.createRange();
  range.selectNodeContents(el);
  var natural = range.getBoundingClientRect().width;
  var count = el.textContent.length;
  el.style.letterSpacing = ((parseFloat(el.dataset.fit) - natural) / count).toFixed(3) + 'px';
});
```
FILE: styles.css
```css
* { box-sizing: border-box; }
body { margin: 0; overflow: hidden; background: #1d1b1a; font-family: "Open Sans", "Noto Sans", sans-serif; }
svg { display: block; flex: none; }
button { border: 0; padding: 0; margin: 0; font: inherit; }
h1, h2, h3, h4, h5, p, ol { margin: 0; padding: 0; }
i, em, u { font-style: normal; text-decoration: none; }
[data-fit] { white-space: nowrap; }
.defs { position: absolute; width: 0; height: 0; }
.desktop { position: relative; width: 1920px; height: 1080px; overflow: hidden; }

/* browser windows */
.window { position: absolute; display: flex; flex-direction: column; background: #2e2f37; }
.window-left { left: -8px; top: -9px; width: 976px; height: 1060px; }
.window-right { left: 961px; top: 0; width: 958px; height: 1042px; outline: 1px solid #3f4044; }

.titlebar { display: flex; align-items: center; height: 53px; padding-left: 8px; background: #4c4c54; color: #b9b9be; }
.logo { width: 24px; height: 24px; }
.caret { width: 10px; height: 7px; color: #c4c4c8; }
.caret-a { margin-left: 8px; }
.layers { width: 21px; height: 22px; margin-left: 27px; }
.caret-b { margin-left: 16px; }
.tabs { display: flex; gap: 2px; margin-left: 20px; }
.tab { display: flex; align-items: center; width: 48.400px; height: 38px; padding-left: 9px; border-radius: 19px; background: #5d5d64; overflow: hidden; font-size: 15px; color: #a5a5aa; box-shadow: 0 1px 2px rgba(0, 0, 0, .15); }
.window-left .tabs { margin-left: 19.500px; }
.tab svg { width: 20px; height: 20px; }
.tab > span { width: 11px; margin-left: 6px; overflow: hidden; white-space: nowrap; }
.tab.active { background: #2e2f37; color: #85878f; }
.tab.single { width: 221px; padding-left: 7px; color: #c3c6d2; font-size: 15px; }
.tab.single svg { width: 22px; height: 18px; }
.tab.single > span { width: auto; }
.newtab { width: 16px; height: 16px; margin-left: 11px; }
.window-left .newtab { margin-left: 9px; }
.tb-icons { display: flex; align-items: center; gap: 17.500px; margin-left: auto; margin-right: 6px; }
.tb-icons .cl { width: 26px; height: 20px; }
.tb-icons .tr { width: 20px; height: 22px; margin-top: -3px; }
.winctl { display: flex; gap: 43.500px; padding: 1px 20px 0 28px; }
.winctl svg { width: 14px; height: 14px; }

.toolbar { display: flex; align-items: center; height: 51px; border-bottom: 1px solid #1b1b20; }
.url { display: flex; align-items: center; width: 266px; height: 35px; margin-left: 7px; padding: 0 11px 0 9px; border-radius: 18px; background: #1d1d25; }
.window-left .url { width: 284px; }
.shield { width: 18px; height: 20px; }
.lock { width: 14px; height: 18px; margin-left: 16px; margin-right: 11px; }
.addr { font-size: 15px; color: #9b9ca8; }
.addr b { font-weight: 500; color: #f0f0f4; }
.mark { width: 12px; height: 18px; margin-left: auto; }
.drop { width: 10px; height: 7px; margin-left: 19px; color: #c9cedb; }
.panelbtn { width: 25px; height: 23px; margin-left: 12px; }
.navs { display: flex; align-items: center; gap: 23px; margin-left: 65px; color: #c9cedb; }
.arrow { width: 23px; height: 16px; }
.dim { color: #73757f; }
.reload { width: 22px; height: 22px; margin-left: 1px; }
.exts { display: flex; margin-left: auto; margin-right: 4px; }
.exts i { position: relative; display: flex; justify-content: center; width: 46.200px; }
.exts svg { width: 20px; height: 20px; }
.exts em { position: absolute; left: 27px; top: -9px; width: 18px; height: 18px; border-radius: 9px; background: #5b5c60; color: #fff; font-size: 11px; font-weight: 700; line-height: 18px; text-align: center; }
.avatar { width: 34px; height: 34px; margin-right: 6px; }

.middle { display: flex; flex: 1; min-height: 0; }
.panelbar { display: flex; flex-direction: column; align-items: center; width: 51px; padding: 17px 0 10px 2px; border-right: 1px solid #2a2a32; }
.panelbar svg { width: 24px; height: 24px; margin-bottom: 22.200px; }
.panelbar .wide { width: 26px; height: 26px; margin-top: -1px; margin-bottom: 21.200px; }
.panelbar .fav { width: 20px; height: 20px; margin-top: 2px; margin-bottom: 24.200px; }
.panelbar .gear { margin-top: auto; margin-bottom: 0; }
.page { position: relative; flex: 1; overflow: hidden; }
.scroll { display: flex; flex-direction: column; align-items: center; width: 20px; background: #424242; }
.window-left .scroll { width: 19px; }
.thumb { width: 17px; height: 410px; margin-top: 121px; background: #686868; }
.window-left .thumb { height: 435px; margin-top: 132px; }
.up { border: 5px solid transparent; border-top: 0; border-bottom-color: #fff; margin-top: 9px; }
.down { border: 5px solid transparent; border-bottom: 0; border-top-color: #fff; margin-top: auto; margin-bottom: 10px; }

.status { display: flex; align-items: center; height: 43px; padding-left: 17px; border-top: 1px solid #1b1b20; color: #c9cedb; font-size: 13.500px; }
.status > .tile { width: 18px; height: 16px; }
.status > .cl { width: 26px; height: 20px; margin-left: 22px; }
.st-icons { display: flex; align-items: center; margin-left: auto; }
.c1 { width: 20px; height: 20px; }
.c2 { width: 23px; height: 22px; margin-left: 21px; }
.c3 { width: 26px; height: 26px; margin-left: 20px; }
.c4 { width: 22px; height: 24px; margin-left: 22px; }
.off { color: #777a86; }
.zoom { display: flex; align-items: center; }
.reset { width: 34px; margin-left: 22px; }
.slider { width: 162px; height: 5px; margin-left: 13px; border-radius: 3px; background: #bcc0cd; }
.slider i { display: block; width: 20px; height: 20px; margin: -7.500px 0 0 24px; border: 1px solid #bcc0cd; border-radius: 50%; background: #2e2f37; }
.window-left .slider i { margin-left: 12px; }
.pct { width: 65px; margin-left: 6.500px; }
.clock { width: 48px; }

/* lesson page */
.hub { display: flex; align-items: flex-start; background: #05faf4; font-family: Inter, "Open Sans", sans-serif; }
.blob { position: absolute; left: 35px; top: -45px; width: 140px; height: 140px; border-radius: 50%; background: #8c52ff; }
.lessons { position: relative; width: 275px; height: 899px; margin: 14px 0 0 14px; padding: 22px 23px 0 22px; border-radius: 16px 16px 0 0; background: #fff; }
.lessons-scroll { height: 877px; overflow: hidden; }
.cut { display: flex; justify-content: space-between; height: 31.700px; font-size: 12.500px; line-height: 14px; color: #777b8b; }
.half { width: 13px; height: 13px; margin-top: -9px; border: 1px solid #d3d4da; border-radius: 50%; background: #f3f4f6; }
.lessons section { height: 89.550px; border-top: 1px solid #ffc39c; }
.lessons h4 { padding-top: 17px; font-size: 16px; line-height: 21px; font-weight: 500; color: #1d1d1f; }
.lessons p { display: flex; align-items: center; height: 20px; margin-top: 15.500px; padding-left: 1.500px; font-size: 12.500px; color: #777b8b; }
.lessons p svg, .long svg { width: 12px; height: 12px; color: #333; }
.lessons p svg { margin-top: -2px; }
.lessons p span { margin-left: 8px; }
.lessons u { display: block; width: 13px; height: 13px; margin-left: auto; border: 1px solid #d3d4da; border-radius: 50%; background: #f3f4f6; }
.lessons .current { height: 103.700px; }
.lessons .current p { height: 34px; margin-top: 15.500px; padding: 0 7px 0 9px; border: 1px solid #8c52ff; border-radius: 6px; background: #e8dcff; color: #8c52ff; }
.lessons .current p svg { color: #8c52ff; }
.lessons .essays { height: auto; }
.essays h4 { padding-bottom: 16px; }
.long { position: relative; height: 42px; font-size: 12.500px; line-height: 19px; color: #777b8b; white-space: nowrap; }
.long svg { display: inline-block; margin: 0 8px 0 1.500px; vertical-align: -1px; }
.long u { position: absolute; right: 0; top: 12px; }
.collapse { position: absolute; left: 254px; top: 461px; width: 34px; height: 34px; border-radius: 50%; background: #000; display: flex; align-items: center; justify-content: center; }
.collapse svg { width: 6px; height: 10px; }

.lesson { width: 577px; margin-left: 27px; padding-top: 19px; }
.actions { display: flex; justify-content: flex-end; gap: 6px; height: 63px; font-size: 14px; }
.done { display: flex; align-items: center; width: 218px; height: 38px; padding: 0 24px 2px 25px; border: 1px solid #8c52ff; border-radius: 7px; background: none; color: #8360ff; }
.done .pl { width: 12px; height: 12px; margin-right: 5px; }
.done i { width: 14px; height: 14px; margin-left: auto; border: 1px solid #8c52ff; border-radius: 50%; }
.notes { width: 125px; height: 39px; margin-top: 1px; padding-right: 1px; border-radius: 5px; background: #ff904d; color: #333; }
.card { height: 618px; padding: 27px; border-radius: 16px; background: #fff; }
.slide { position: relative; height: 300px; border: 1px solid #000; border-radius: 6px; overflow: hidden; background: #05faf4; }
.slide h1 { margin: -10px 4px 0 0; text-align: center; font-size: 41px; line-height: 55.800px; font-weight: 900; color: #000; -webkit-text-stroke: .5px #000; }
.slide h1 span { display: block; }
.slide-scroll { position: absolute; right: 0; top: 0; width: 7px; height: 298px; border-radius: 4px; background: #ff9f66; }
.slide-scroll div { height: 123px; margin-top: 60px; border-radius: 4px; background: #8c52ff; }
.bump { position: absolute; left: 176px; top: 290px; width: 160px; height: 160px; border-radius: 50%; background: #a775f3; }
.card h5 { margin-top: 7px; font-size: 16px; line-height: 24px; font-weight: 500; color: #1d1d1f; }
.card ol { margin-top: 6.500px; list-style: none; font-size: 14px; font-weight: 300; line-height: 22.500px; color: #2e2e30; }
.card li span { display: block; }
.quiz { height: 131px; margin-top: 22px; border: 1px solid #000; border-radius: 16px; overflow: hidden; background: #fff; }
.quiz header { height: 57px; padding: 0 16px; border-bottom: 1px solid #000; background: #ff8a4c; color: #fff; font-size: 16px; font-weight: 900; line-height: 57px; -webkit-text-stroke: .4px #fff; }
.quiz div { padding: 15px 16px; font-size: 13.500px; line-height: 24px; color: #444; }
.pager { display: flex; justify-content: flex-end; gap: 10px; margin-top: 37px; }
.pager b { display: flex; justify-content: center; width: 38px; height: 38px; padding-top: 10px; border-radius: 50%; background: #000; }
.pager svg { width: 18px; height: 14px; }
.chat { position: absolute; left: 851px; top: 817px; display: flex; align-items: center; justify-content: center; width: 36px; height: 36px; border-radius: 50%; background: #fce47f; box-shadow: 0 2px 16px rgba(0, 0, 0, .15); }
.chat svg { width: 16px; height: 18px; }
.captcha { position: absolute; left: 854px; top: 858px; width: 60px; height: 45px; padding: 5px 0 0 12px; border-radius: 2px; background: #f9f9f9; box-shadow: 0 0 4px #777; }
.captcha svg { width: 28px; height: 28px; }
.captcha small { display: block; margin: 2px 0 0 -7px; font-size: 5.500px; line-height: 9px; font-weight: 600; color: #333; }

/* exam board page */
.aqa { display: flex; flex-direction: column; align-items: center; padding-top: 10px; background: #1e2122; color: #d2cec8; }
.question { width: 140px; height: 140px; }
.aqa h1 { margin-top: 76px; font-size: 60px; line-height: 80px; font-weight: 600; color: #a97df0; }
.aqa h2 { margin-top: 19px; font-size: 30px; line-height: 50px; font-weight: 600; text-align: center; color: #c8c3bc; }
.aqa h2 span { display: block; }
.papers { display: flex; align-items: center; flex: none; width: 283px; height: 60px; margin-top: 80px; padding: 0 0 1px 32px; border-radius: 30px; background: #a0123a; color: #e8e6e3; font-size: 20px; font-weight: 600; }
.papers svg { width: 16px; height: 24px; margin-left: 19px; }
.find { display: flex; align-items: center; gap: 19px; height: 76px; margin-top: 40px; font-size: 20px; font-weight: 600; }
.find span { margin-top: -2px; }
.find svg { width: 76px; height: 76px; }
.cookies { position: absolute; left: 0; right: 0; bottom: 0; height: 249px; padding: 23px 40px 0 20px; background: #222324; color: #ccc7c0; }
.cookies h3 { font-size: 24px; line-height: 36px; font-weight: 600; }
.cookies p { margin-top: 10px; font-size: 20px; line-height: 28px; white-space: nowrap; }
.cookies a { color: #5b9df0; text-decoration: underline; }
.cookies .notice { margin-left: 12px; font-weight: 700; }
.choices { display: flex; align-items: center; gap: 20px; margin-top: 12px; font-size: 20px; }
.choices a { margin-right: auto; padding-bottom: 2px; }
.choices button { width: 156px; height: 58px; padding-bottom: 2px; background: #143a9c; color: #e8e6e3; }

/* taskbar */
.taskbar { position: absolute; left: 0; top: 1042px; display: flex; width: 1920px; height: 38px; background: #1d1b1a; color: #fff; }
.start { width: 45px; padding: 9px 0 0 12px; }
.start svg { width: 20px; height: 20px; }
.searchbox { display: flex; align-items: center; width: 323px; height: 38px; padding: 0 9px 0 14px; border: 1px solid #5f5f5f; background: #333; font-size: 18px; color: #dcdcdc; }
.glass { width: 21px; height: 21px; margin-right: 14px; }
.sparkle { width: 58px; height: 24px; margin-left: auto; }
.apps { display: flex; margin-left: 3px; }
.apps i { display: flex; justify-content: center; width: 46px; height: 38px; padding-top: 9px; }
.apps svg { width: 20px; height: 20px; }
.apps .run { background: linear-gradient(#ffc8a8, #ffc8a8) 50% 100% / 35px 3px no-repeat; }
.apps .focus { background: linear-gradient(#ffc8a8, #ffc8a8) 0 100% / 45px 3px no-repeat, linear-gradient(#4a4a4c, #4a4a4c) 0 0 / 40px 38px no-repeat, linear-gradient(#3a3a3a, #3a3a3a) 0 0 / 45px 38px no-repeat; }
.apps .multi { background: linear-gradient(90deg, #ffc8a8 24px, #b08f7c 24px) 50% 100% / 35px 3px no-repeat; }
.tray { display: flex; align-items: center; margin-left: auto; height: 38px; padding-right: 25px; margin-right: 5px; border-right: 1px solid #777; }
.weather { width: 32px; height: 26px; margin-top: -5px; }
.badge { font: 11px "Open Sans", sans-serif; fill: #fff; }
.temp, .cond { font-size: 17.500px; }
.temp { margin-left: 10px; }
.cond { margin-left: 11px; }
.t1 { width: 17px; height: 10px; margin-left: 23px; }
.t2 { width: 21px; height: 15px; margin-left: 11px; }
.t3 { width: 17px; height: 17px; margin-left: 12px; }
.t4 { width: 21px; height: 18px; margin-left: 10px; }
.t5 { width: 21px; height: 20px; margin-left: 14px; }
.time { width: 34px; margin-left: 19px; font-size: 14px; }
.t6 { width: 20px; height: 20px; margin-left: 23px; margin-top: -2px; }
```
